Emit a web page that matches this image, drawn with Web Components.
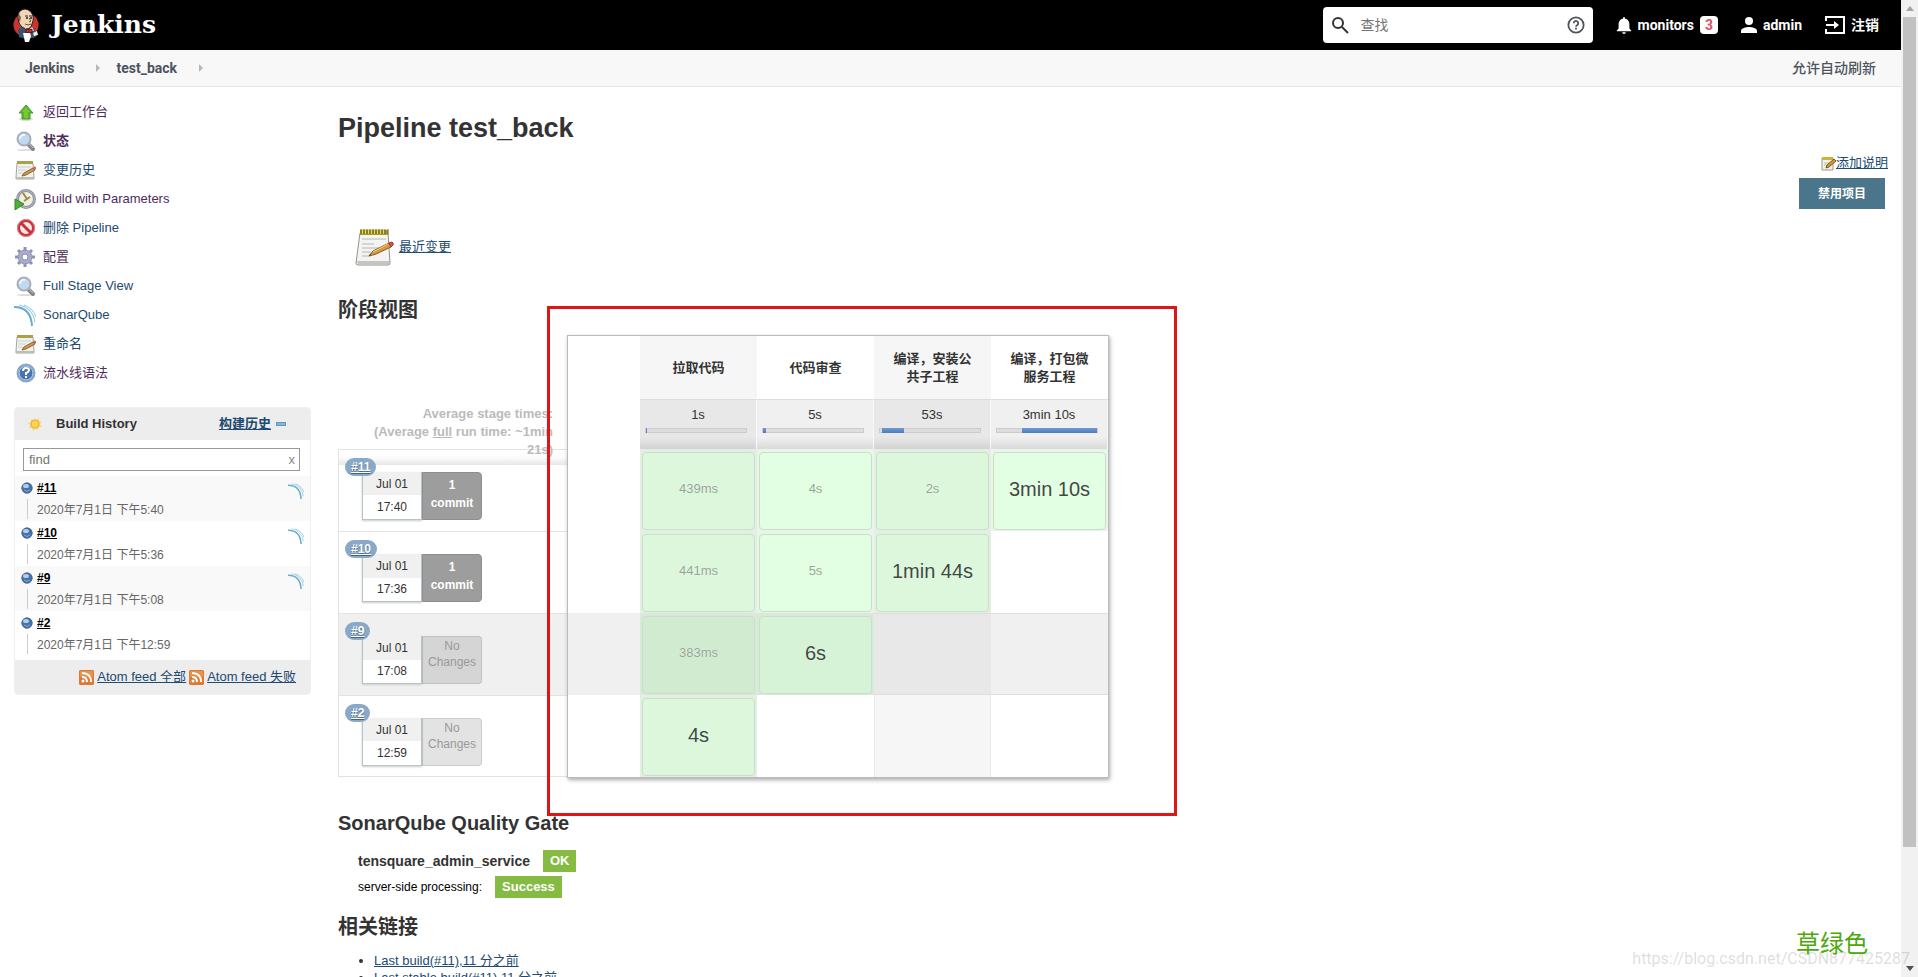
<!DOCTYPE html>
<html lang="zh-CN">
<head>
<meta charset="UTF-8">
<meta name="viewport" content="width=device-width, initial-scale=1.0">
<title>test_back [Jenkins]</title>
<style>
  html, body {
    height: 100%;
    margin: 0;
    overflow: hidden;
  }

  body {
    font-family: "Liberation Sans", "Noto Sans CJK SC", sans-serif;
    font-size: 13px;
    line-height: 18px;
    color: #333;
    background-color: #fff;
    --link: #204a6f;
    --visited: #4f2c5a;
  }
</style>
</head>
<body>
<jenkins-app></jenkins-app>

<script>
// Icons
const notepad = `
  <path d="M5 6h28l2 30q0 2-2 2H3q-2 0-2-2z" fill="#f4f4f2" stroke="#92928c"/>
  <path d="M2 34h32v3H3z" fill="#c4c4c0"/>
  <path d="M5 3h28v5H5z" fill="#a79a2c"/>
  <path d="M6 2v5M9 2v5M12 2v5M15 2v5M18 2v5M21 2v5M24 2v5M27 2v5M30 2v5M33 2v5" stroke="#6d6315" stroke-width="1"/>
  <path d="M7.500 2v5M10.500 2v5M13.500 2v5M16.500 2v5M19.500 2v5M22.500 2v5M25.500 2v5M28.500 2v5" stroke="#e8dc64" stroke-width="1"/>
  <path d="M7 12h24M7 17h12M7 21h20M7 25h9M7 29h8" stroke="#b4b6ba"/>
  <path d="M14 29l4-5 16-8 2 4-15 7z" fill="#d79a3f" stroke="#8a5a1c"/>
  <path d="M18 25l15-8" stroke="#f3cf86" stroke-width="1"/>
  <path d="M34 16l3-1q2 1 1 3l-2 2z" fill="#d8575a" stroke="#a33"/>
  <path d="M14 29l1-2 1 1z" fill="#333"/>`;

const data_icons = {
  butler: ['0 0 26 34', `
    <ellipse cx="13" cy="17" rx="12.500" ry="12" fill="#c8342e"/>
    <path d="M5 22q3-4 8-3 6-1 9 3l1 7q-9 3-17 0z" fill="#3a546b"/>
    <path d="M6 4q6-6 12 0 4 5 1 12-1 5-6 5-5-1-7-6-2-7 0-11z" fill="#f0d6b7" stroke="#2b1a14" stroke-width="1"/>
    <path d="M6 5Q4 9 7 14l1-5q-2-2-2-4z" fill="#7b6350"/>
    <path d="M12 8h3M16 8h3" stroke="#3a2a20" stroke-width="1"/>
    <circle cx="14" cy="10" r="1" fill="#222"/><circle cx="18" cy="10" r="1" fill="#222"/>
    <path d="M16 10l2 3-2 1M12 16q3 2 6 0" fill="none" stroke="#7d4a35" stroke-width="1"/>
    <path d="M12 19l3 4 4-4 2 4-8-1z" fill="#fff"/>
    <path d="M13 21l3 1 3-1v4l-3-1-3 1z" fill="#c8342e" stroke="#5c1210" stroke-width="1"/>
    <path d="M10 25h7l1 3-2 6h-4z" fill="#fff"/>
    <path d="M20 25l4-2 1 4-4 1z" fill="#f4f0e6"/>`],
  search: ['0 0 18 18', '<circle cx="7" cy="7" r="5" fill="none" stroke="#333" stroke-width="2"/><path d="M11 11l6 6" stroke="#333" stroke-width="2"/>'],
  question: ['0 0 20 20', '<circle cx="10" cy="10" r="8.500" fill="none" stroke="#4d545d" stroke-width="2"/><path d="M7.500 8a2.500 2.500 0 1 1 4 2Q10 11 10 12" fill="none" stroke="#4d545d" stroke-width="2"/><path d="M9 13h2v2H9z" fill="#4d545d"/>'],
  bell: ['0 0 16 20', '<path d="M8 20a2 2 0 0 0 2-2H6a2 2 0 0 0 2 2zM14 14V9c0-3-2-6-5-6V2a1 1 0 0 0-2 0v1C4 3 2 6 2 9v5l-2 2v1h16v-1z" fill="#fff"/>'],
  person: ['0 0 16 16', '<circle cx="8" cy="4" r="4" fill="#fff"/><path d="M0 16v-2c0-3 5-4 8-4s8 1 8 4v2z" fill="#fff"/>'],
  logout: ['0 0 20 18', '<path d="M1 5V1h18v16H1v-4M1 9h11" fill="none" stroke="#fff" stroke-width="2"/><path d="M9 5l5 4-5 4z" fill="#fff"/>'],
  up: ['0 0 22 22', '<ellipse cx="12" cy="18" rx="7" ry="2" fill="#ddd"/><path d="M12 4l7 8h-3v6H8v-6H5z" fill="#5cb52c" stroke="#4b9a26"/><path d="M12 6l4 5h-2v6h-4v-6H8z" fill="#74c83a"/>'],
  lens: ['0 0 22 22', '<ellipse cx="11" cy="20" rx="8" ry="1" fill="#ddd"/><path d="M14 14l5 5" stroke="#85868c" stroke-width="4" stroke-linecap="round"/><path d="M15 14l4 4" stroke="#c3c3c8" stroke-width="1"/><circle cx="10" cy="9" r="6.500" fill="#bfd9f2" stroke="#a9aeb9" stroke-width="2"/><path d="M6 9a4 4 0 0 1 5-4" stroke="#eef7ff" stroke-width="2" fill="none"/>'],
  notepad: ['0 0 40 40', notepad],
  notes: ['0 0 22 22', `
    <path d="M3 4h16l1 14v2H2v-2z" fill="#f1f1ee" stroke="#a6a69f"/>
    <path d="M2 18h18v2H2z" fill="#bdbdb8"/>
    <path d="M3 2h16v3H3z" fill="#aaa04a"/>
    <path d="M4 8h13M4 11h8M4 14h5" stroke="#cfd0d2"/>
    <path d="M8 17l2-3 9-5 2 2-9 5z" fill="#cf9a4b" stroke="#8a6430"/>
    <path d="M20 8l2 2" stroke="#c9605c" stroke-width="2"/>`],
  clock: ['0 0 22 22', '<circle cx="12" cy="11" r="8.500" fill="#eef0e6" stroke="#8b8e98" stroke-width="3"/><circle cx="12" cy="11" r="8.500" fill="none" stroke="#b9bcc6" stroke-width="1"/><path d="M9 5l4 6-3 2M13 11l3-2" stroke="#a3893a" stroke-width="2" fill="none"/><path d="M1 11l9 5-9 6z" fill="#4fae35" stroke="#2f8a24"/>'],
  forbid: ['0 0 22 22', '<circle cx="12" cy="11" r="7.500" fill="#f3e9e9" stroke="#c8323a" stroke-width="3"/><circle cx="12" cy="11" r="8.500" fill="none" stroke="#e08a8e" stroke-width="1"/><path d="M7 6l10 10" stroke="#c8323a" stroke-width="3"/>'],
  gear: ['0 0 22 22', '<g stroke="#8f92b4" stroke-width="3"><path d="M11 1v20M1 11h20M4 4l14 14M18 4L4 18"/></g><circle cx="11" cy="11" r="7" fill="#a9abca" stroke="#9093b4"/><circle cx="11" cy="11" r="3" fill="#fff" stroke="#8a8dad"/>'],
  sonar: ['0 0 22 22', '<g fill="none"><path d="M0 3q17 0 18 19" stroke="#68abcb" stroke-width="2"/><path d="M5 1q14 3 16 17M10 1q10 4 12 12" stroke="#8fc3dc"/></g>'],
  help: ['0 0 22 22', '<circle cx="12" cy="11" r="8.500" fill="#4674b0" stroke="#8ba5c9" stroke-width="2"/><circle cx="12" cy="11" r="7" fill="none" stroke="#c5d6ec"/><path d="M9 9q0-3 3-3t3 2q0 2-3 3v2" fill="none" stroke="#fff" stroke-width="2"/><path d="M11 14h2v2h-2z" fill="#fff"/>'],
  sun: ['0 0 16 16', '<path d="M8 1l1 3 3-2 0 3 3 1-2 2 2 3-3 0-1 3-3-1-2 2-1-3-3 0 1-3-2-2 3-1 0-3 3 1z" fill="#f3d68a"/><circle cx="8" cy="8" r="4" fill="#ffd84a" stroke="#eda93a"/>'],
  minus: ['0 0 10 4', '<path d="M0 0h10v4H0z" fill="#5e9bc8"/><path d="M1 2h8" stroke="#a9cfea"/>'],
  ball: ['0 0 12 12', '<circle cx="6" cy="6" r="5.500" fill="#4573ab"/><circle cx="6" cy="6" r="5" fill="none" stroke="#4d678c"/><ellipse cx="5" cy="4" rx="3" ry="2" fill="#b4cdea"/><path d="M3 8q3 3 6 0" stroke="#7fa8d6" fill="none"/>'],
  rss: ['0 0 15 15', '<path d="M1 0h13l1 1v13l-1 1H1l-1-1V1z" fill="#dd7a35"/><path d="M1 1h13v6H1z" fill="#e8924f"/><circle cx="4" cy="11" r="1.500" fill="#fff"/><path d="M3 7q5 0 5 5M3 3q9 0 9 9" fill="none" stroke="#fff" stroke-width="2"/>'],
  edit: ['0 0 15 15', '<path d="M1 2h11v12H1z" fill="#f2f1e4" stroke="#9a9a8e"/><path d="M1 1h11v3H1z" fill="#c9b53c"/><path d="M3 7h5M3 9h4" stroke="#bbb"/><path d="M5 12l1-3 7-6 2 2-7 6z" fill="#cc9a3c" stroke="#7a5a1c"/>'],
  right: ['0 0 4 8', '<path d="M0 0l4 4-4 4z" fill="#b5b9bd"/>'],
  arrowup: ['0 0 8 5', '<path d="M0 5l4-5 4 5z" fill="#a3a3a3"/>'],
  arrowdown: ['0 0 8 5', '<path d="M0 0l4 5 4-5z" fill="#505050"/>']
};

// Sidebar tasks: icon, text, state
const data_tasks = [
  ['up', '返回工作台', 'visited'],
  ['lens', '状态', 'visited current'],
  ['notes', '变更历史', ''],
  ['clock', 'Build with Parameters', 'visited'],
  ['forbid', '删除 Pipeline', ''],
  ['gear', '配置', 'visited'],
  ['lens', 'Full Stage View', ''],
  ['sonar', 'SonarQube', ''],
  ['notes', '重命名', ''],
  ['help', '流水线语法', 'visited']
];

const data_builds = [
  { id: '#11', date: '2020年7月1日 下午5:40', sonar: true, time: '17:40', commits: 1, stages: ['439ms', '4s', '2s', '3min 10s'] },
  { id: '#10', date: '2020年7月1日 下午5:36', sonar: true, time: '17:36', commits: 1, stages: ['441ms', '5s', '1min 44s'] },
  { id: '#9', date: '2020年7月1日 下午5:08', sonar: true, time: '17:08', commits: 0, stages: ['383ms', '6s'] },
  { id: '#2', date: '2020年7月1日 下午12:59', sonar: false, time: '12:59', commits: 0, stages: ['4s'] }
];

// Stages: name, average, start and width of the bar in %
const data_stages = [
  ['拉取代码', '1s', 0, 1],
  ['代码审查', '5s', 0, 3],
  ['编译，安装公共子工程', '53s', 2, 22],
  ['编译，打包微服务工程', '3min 10s', 25, 75]
];

class JenkinsIcon extends HTMLElement {
  constructor() {
    super();
    this.attachShadow({ mode: "open" });
  }

  connectedCallback() {
    const [box, shape] = data_icons[this.getAttribute("name")];
    this.shadowRoot.innerHTML = `
      <style>
        :host {
          display: inline-block;
          flex: none;
          width: 22px;
          height: 22px;
        }

        svg {
          display: block;
          width: 100%;
          height: 100%;
        }
      </style>
      <svg viewBox="${box}" aria-hidden="true">${shape}</svg>
    `;
  }
}

class JenkinsHeader extends HTMLElement {
  constructor() {
    super();
    this.attachShadow({ mode: "open" });
  }

  connectedCallback() {
    this.shadowRoot.innerHTML = `
      <style>
        :host {
          display: flex;
          align-items: center;
          height: 50px;
          padding: 0 22px 0 13px;
          background-color: #000;
          color: #fff;
          font-family: Roboto, "Noto Sans CJK SC", sans-serif;
          font-size: 14px;
          font-weight: 700;
        }

        a {
          display: flex;
          align-items: center;
          color: inherit;
          text-decoration: none;
        }

        .logo {
          gap: 12px;
          margin-right: auto;
          font-family: "DejaVu Serif", serif;
          font-size: 25px;
        }

        .logo jenkins-icon {
          width: 26px;
          height: 34px;
        }

        .search {
          display: flex;
          align-items: center;
          box-sizing: border-box;
          width: 270px;
          height: 36px;
          padding: 0 8px;
          background-color: #fff;
          border-radius: 4px;
        }

        .search jenkins-icon {
          width: 18px;
          height: 18px;
        }

        input {
          flex: 1;
          min-width: 0;
          padding: 0 12px;
          border: 0;
          outline: 0;
          background: none;
          font: inherit;
          font-weight: 400;
        }

        input::placeholder {
          color: #757575;
        }

        .link {
          gap: 6px;
          margin-left: 23px;
        }

        .link jenkins-icon {
          width: 16px;
          height: 16px;
        }

        .link jenkins-icon.tall {
          height: 18px;
        }

        .link jenkins-icon.wide {
          width: 20px;
          height: 18px;
        }

        .count {
          width: 18px;
          border-radius: 4px;
          background-color: #fff;
          color: #e05263;
          text-align: center;
          line-height: 18px;
        }
      </style>
      <a class="logo" href="#"><jenkins-icon name="butler"></jenkins-icon><span>Jenkins</span></a>
      <div class="search">
        <jenkins-icon name="search"></jenkins-icon>
        <input type="text" placeholder="查找" aria-label="查找">
        <a href="#" aria-label="帮助"><jenkins-icon name="question"></jenkins-icon></a>
      </div>
      <a class="link" href="#"><jenkins-icon class="tall" name="bell"></jenkins-icon>monitors<span class="count">3</span></a>
      <a class="link" href="#"><jenkins-icon name="person"></jenkins-icon>admin</a>
      <a class="link" href="#"><jenkins-icon class="wide" name="logout"></jenkins-icon>注销</a>
    `;
  }
}

class JenkinsBreadcrumb extends HTMLElement {
  constructor() {
    super();
    this.attachShadow({ mode: "open" });
  }

  connectedCallback() {
    this.shadowRoot.innerHTML = `
      <style>
        :host {
          display: flex;
          align-items: center;
          box-sizing: border-box;
          height: 37px;
          padding: 0 25px;
          background-color: #f8f8f8;
          border-bottom: 1px solid #e6e6e6;
          font-family: Roboto, "Noto Sans CJK SC", sans-serif;
          font-size: 14px;
          font-weight: 700;
        }

        a {
          color: #4d545d;
          text-decoration: none;
        }

        jenkins-icon {
          width: 4px;
          height: 8px;
          margin: 0 16px 0 22px;
        }

        .refresh {
          margin-left: auto;
          font-weight: 500;
        }
      </style>
      <a href="#">Jenkins</a><jenkins-icon name="right"></jenkins-icon>
      <a href="#">test_back</a><jenkins-icon name="right"></jenkins-icon>
      <a class="refresh" href="#">允许自动刷新</a>
    `;
  }
}

class TaskList extends HTMLElement {
  constructor() {
    super();
    this.attachShadow({ mode: "open" });
  }

  connectedCallback() {
    this.shadowRoot.innerHTML = `
      <style>
        :host {
          display: block;
        }

        a {
          display: flex;
          align-items: center;
          gap: 7px;
          height: 29px;
          color: var(--link);
          text-decoration: none;
        }

        .visited {
          color: var(--visited);
        }

        .current {
          font-weight: 700;
        }
      </style>
      ${data_tasks.map(([icon, text, state]) => `
        <a class="${state}" href="#"><jenkins-icon name="${icon}"></jenkins-icon>${text}</a>
      `).join("")}
    `;
  }
}

class BuildHistory extends HTMLElement {
  constructor() {
    super();
    this.attachShadow({ mode: "open" });
  }

  connectedCallback() {
    this.shadowRoot.innerHTML = `
      <style>
        :host {
          display: block;
          box-sizing: border-box;
          border: 1px solid #f0f0f0;
          border-radius: 4px;
          overflow: hidden;
        }

        a {
          color: var(--link);
        }

        .head {
          display: flex;
          align-items: center;
          height: 32px;
          padding: 0 24px 0 12px;
          background-color: #ededed;
          font-weight: 700;
        }

        .head jenkins-icon {
          width: 16px;
          height: 16px;
          margin-right: 13px;
        }

        .head a {
          margin-left: auto;
        }

        .head button {
          display: flex;
          margin-left: 5px;
          padding: 0;
          border: 0;
          background: none;
        }

        .head button jenkins-icon {
          width: 10px;
          height: 4px;
          margin: 0;
        }

        .find {
          display: flex;
          align-items: center;
          box-sizing: border-box;
          height: 23px;
          margin: 8px 10px 5px 8px;
          padding: 0 4px 0 5px;
          border: 1px solid #999;
          color: #888;
        }

        .find input {
          flex: 1;
          min-width: 0;
          padding: 0;
          border: 0;
          outline: 0;
          background: none;
          font: inherit;
        }

        .find input::placeholder {
          color: #757575;
        }

        .build {
          display: grid;
          grid-template-columns: 12px 1fr 16px;
          grid-template-rows: 23px 22px;
          column-gap: 4px;
          align-items: center;
          padding: 0 6px;
        }

        .build:nth-of-type(odd) {
          background-color: #f9f9f9;
        }

        .build jenkins-icon {
          width: 12px;
          height: 12px;
        }

        .build jenkins-icon.sonar {
          align-self: end;
          width: 16px;
          height: 16px;
        }

        .build a {
          color: #000;
          font-size: 12px;
          font-weight: 700;
        }

        .line {
          grid-row: 2;
          align-self: start;
          justify-self: center;
          width: 1px;
          height: 20px;
          background-color: #ccc;
        }

        .date {
          grid-row: 2;
          grid-column: 2;
          font-size: 12px;
          color: #666;
        }

        .feeds {
          display: flex;
          align-items: center;
          justify-content: flex-end;
          gap: 3px;
          height: 34px;
          margin-top: 4px;
          padding-right: 14px;
          background-color: #ededed;
        }

        .feeds jenkins-icon {
          width: 15px;
          height: 15px;
        }
      </style>
      <div class="head">
        <jenkins-icon name="sun"></jenkins-icon>Build History
        <a href="#">构建历史</a>
        <button type="button" aria-label="折叠"><jenkins-icon name="minus"></jenkins-icon></button>
      </div>
      <div class="find"><input type="text" placeholder="find" aria-label="find"><span>x</span></div>
      <section>
        ${data_builds.map(build => `
          <div class="build">
            <jenkins-icon name="ball"></jenkins-icon>
            <a href="#"><span>${build.id}</span></a>
            ${build.sonar ? '<jenkins-icon class="sonar" name="sonar"></jenkins-icon>' : ''}
            <span class="line"></span>
            <span class="date">${build.date}</span>
          </div>
        `).join("")}
      </section>
      <div class="feeds">
        <jenkins-icon name="rss"></jenkins-icon><a href="#">Atom feed 全部</a>
        <jenkins-icon name="rss"></jenkins-icon><a href="#">Atom feed 失败</a>
      </div>
    `;
  }
}

// One run at the left of the stage table
class StageRun extends HTMLElement {
  constructor() {
    super();
    this.attachShadow({ mode: "open" });
  }

  connectedCallback() {
    const commits = Number(this.getAttribute("commits"));
    this.shadowRoot.innerHTML = `
      <style>
        :host {
          display: flex;
          position: relative;
          box-sizing: border-box;
          height: 82px;
          padding: 22px 0 0 23px;
          border-top: 1px solid #e2e2e2;
          border-left: 1px solid #e2e2e2;
          font-size: 12px;
        }

        .badge {
          position: absolute;
          top: 8px;
          left: 6px;
          padding: 0 6px;
          border-radius: 9px;
          background-color: #8aa9c9;
          color: #fff;
          font-weight: 700;
          text-shadow: 0 1px 1px #46617e;
        }

        .when {
          display: grid;
          grid-template-rows: 1fr 1fr;
          align-items: center;
          box-sizing: border-box;
          width: 60px;
          height: 48px;
          border: 1px solid #b4c4c4;
          border-top: 0;
          background: linear-gradient(#f0f0f0 50%, #fff 50%);
          box-shadow: 0 1px 2px #ccc;
          text-align: center;
        }

        .changes {
          box-sizing: border-box;
          width: 60px;
          height: 48px;
          padding-top: 3px;
          border: 1px solid #8e8e8e;
          border-radius: 0 4px 4px 0;
          background-color: #9d9d9d;
          color: #fff;
          font-weight: 700;
          text-align: center;
        }

        .changes.none {
          padding-top: 1px;
          border-color: rgba(0, 0, 0, .1);
          background-color: rgba(0, 0, 0, .11);
          color: #999;
          font-weight: 400;
          line-height: 16px;
        }
      </style>
      <div class="when"><span>Jul 01</span><span><slot></slot></span></div>
      ${commits
        ? `<div class="changes">${commits}<br>commit</div>`
        : '<div class="changes none">No<br>Changes</div>'}
      <a class="badge" href="#">${this.getAttribute("run")}</a>
    `;
  }
}

class StageView extends HTMLElement {
  constructor() {
    super();
    this.attachShadow({ mode: "open" });
  }

  connectedCallback() {
    this.shadowRoot.innerHTML = `
      <style>
        :host {
          display: grid;
          position: relative;
          grid-template-columns: 229px 542px;
        }

        .runs {
          padding-top: 70px;
        }

        .average {
          position: relative;
          z-index: 1;
          width: 190px;
          margin: 0 14px -10px auto;
          color: #bbb;
          font-weight: 700;
          text-align: right;
        }

        stage-run:first-of-type {
          background: linear-gradient(#fff, #fcfcfc 50%, #e6e6e6) 0 0 / 100% 15px no-repeat;
        }

        stage-run:last-of-type {
          border-bottom: 1px solid #e2e2e2;
        }

        .hover {
          background-color: #f0f0f0;
        }

        table {
          position: relative;
          table-layout: fixed;
          width: 542px;
          border: 1px solid #bbb;
          border-spacing: 0;
          background-color: #fff;
          box-shadow: 1px 2px 4px #aaa;
          text-align: center;
        }

        th, td {
          box-sizing: border-box;
          padding: 0;
        }

        .empty {
          width: 72px;
        }

        .names th {
          height: 63px;
          padding: 0 18px;
        }

        .names th:nth-child(even) {
          background-color: #f6f6f6;
        }

        .times td {
          height: 50px;
          padding: 6px 5px 0;
          border-top: 1px solid #ddd;
          border-right: 1px solid #f8f8f8;
          background: linear-gradient(#f0f0f0 75%, #dadada);
          vertical-align: top;
        }

        .times td:nth-child(even) {
          background: linear-gradient(#e8e8e8 75%, #d2d2d2);
        }

        .times td.empty {
          border: 0;
          background: #fff;
        }

        .bar {
          box-sizing: border-box;
          height: 5px;
          margin: 4px 4px 0 0;
          border: 1px solid #ccc;
          background-color: #ddd;
        }

        .bar div {
          height: 5px;
          margin-top: -1px;
          background: linear-gradient(#7099d0, #4a7cc0);
        }

        .stage {
          height: 82px;
        }

        .stage:nth-child(even) {
          border-left: 1px solid #e9e9e9;
          border-right: 1px solid #e9e9e9;
          background-color: #f6f6f6;
        }

        .stage.done {
          padding: 3px 2px 1px;
          border: 0;
          background-color: #eaf5ea;
        }

        .stage.done:nth-child(even) {
          background-color: #e2efe2;
        }

        .box {
          display: flex;
          align-items: center;
          justify-content: center;
          box-sizing: border-box;
          height: 78px;
          padding-bottom: 4px;
          border: 1px solid #c9dfc9;
          border-radius: 4px;
          background-color: #e3ffe3;
          color: #93a693;
          text-shadow: 0 0 1px #fff;
        }

        .stage:nth-child(even) .box {
          background-color: #dcf7dc;
        }

        .box.last {
          color: #3c4b3c;
          font-size: 20px;
        }

        .hover .stage {
          border-top: 1px solid #dfdfdf;
          border-bottom: 1px solid #dfdfdf;
        }

        .hover .stage:nth-child(even) {
          background-color: #e8e8e8;
        }

        .hover .stage.done {
          border: 0;
          background-color: #d9e9d9;
        }

        .hover .stage .box {
          background-color: #d7f3d7;
        }

        .hover .stage:nth-child(even) .box {
          background-color: #d0ebd0;
        }

        .frame {
          position: absolute;
          z-index: 2;
          top: -29px;
          left: 209px;
          box-sizing: border-box;
          width: 630px;
          height: 510px;
          border: 3px solid #dd1515;
          pointer-events: none;
        }
      </style>
      <div class="runs">
        <div class="average">Average stage times:<br>(Average <u>full</u> run time: ~1min 21s)</div>
        ${data_builds.map((build, i) => `
          <stage-run class="${i === 2 ? 'hover' : ''}" run="${build.id}" commits="${build.commits}">${build.time}</stage-run>
        `).join("")}
      </div>
      <table>
        <thead>
          <tr class="names">
            <td class="empty"></td>
            ${data_stages.map(stage => `<th scope="col">${stage[0]}</th>`).join("")}
          </tr>
          <tr class="times">
            <td class="empty"></td>
            ${data_stages.map(([, time, start, width]) => `
              <td>${time}<div class="bar"><div style="margin-left: ${start}%; width: ${width}%"></div></div></td>
            `).join("")}
          </tr>
        </thead>
        <tbody>
          ${data_builds.map((build, i) => `
            <tr class="${i === 2 ? 'hover' : ''}">
              <td class="empty"></td>
              ${data_stages.map((stage, n) => this.cell(build.stages, n)).join("")}
            </tr>
          `).join("")}
        </tbody>
      </table>
      <div class="frame"></div>
    `;
  }

  cell(stages, n) {
    if (!stages[n]) {
      return '<td class="stage"></td>';
    }
    const last = n === stages.length - 1 ? 'last' : '';
    return `<td class="stage done"><div class="box ${last}">${stages[n]}</div></td>`;
  }
}

class QualityGate extends HTMLElement {
  constructor() {
    super();
    this.attachShadow({ mode: "open" });
  }

  connectedCallback() {
    this.shadowRoot.innerHTML = `
      <style>
        :host {
          display: grid;
          gap: 4px;
          padding-left: 20px;
        }

        div {
          display: flex;
          align-items: center;
          gap: 13px;
          height: 22px;
          color: #000;
          font-size: 12px;
        }

        .project {
          color: #333;
          font-size: 14px;
          font-weight: 700;
        }

        .label {
          padding: 0 7px;
          background-color: #85bb43;
          color: #fff;
          font-size: 13px;
          font-weight: 700;
          line-height: 22px;
        }
      </style>
      <div><span class="project">tensquare_admin_service</span><span class="label">OK</span></div>
      <div><span>server-side processing:</span><span class="label">Success</span></div>
    `;
  }
}

class ScrollRail extends HTMLElement {
  constructor() {
    super();
    this.attachShadow({ mode: "open" });
  }

  connectedCallback() {
    this.shadowRoot.innerHTML = `
      <style>
        :host {
          display: grid;
          grid-template-rows: 17px 1fr 17px;
          justify-items: center;
          align-items: center;
          width: 17px;
          background-color: #f1f1f1;
        }

        jenkins-icon {
          width: 8px;
          height: 5px;
        }

        .thumb {
          align-self: start;
          width: 13px;
          height: 88%;
          background-color: #c1c1c1;
        }
      </style>
      <jenkins-icon name="arrowup"></jenkins-icon>
      <div class="thumb"></div>
      <jenkins-icon name="arrowdown"></jenkins-icon>
    `;
  }
}

class JenkinsApp extends HTMLElement {
  constructor() {
    super();
    this.attachShadow({ mode: "open" });
  }

  connectedCallback() {
    this.shadowRoot.innerHTML = `
      <style>
        :host {
          display: grid;
          position: relative;
          grid-template-columns: minmax(0, 1fr) 17px;
          height: 100vh;
          overflow: hidden;
        }

        .content {
          overflow: hidden;
        }

        .page {
          display: grid;
          grid-template-columns: 297px minmax(0, 1fr);
          column-gap: 27px;
          padding: 10px 13px 0 14px;
        }

        build-history {
          margin-top: 20px;
        }

        main {
          padding-top: 15px;
        }

        h1, h2 {
          margin: 0;
        }

        h1 {
          font-size: 27px;
          line-height: 32px;
        }

        h2 {
          font-size: 20px;
          line-height: 24px;
        }

        a {
          color: var(--link);
        }

        .description {
          display: grid;
          justify-items: end;
          gap: 6px;
          margin-top: 10px;
        }

        .description a, .changes {
          display: flex;
          align-items: center;
        }

        .description jenkins-icon {
          width: 15px;
          height: 15px;
        }

        button {
          height: 31px;
          margin-right: 3px;
          padding: 0 19px;
          border: 0;
          background-color: #4b758b;
          color: #fff;
          font: inherit;
          font-size: 12px;
          font-weight: 700;
        }

        .changes {
          gap: 4px;
          margin: 18px 0 31px 17px;
        }

        .changes jenkins-icon {
          width: 40px;
          height: 40px;
        }

        stage-view {
          margin: 13px 0 33px;
        }

        quality-gate {
          margin: 15px 0 17px;
        }

        ul {
          margin: 13px 0 0;
          padding-left: 36px;
          line-height: 17px;
        }

        .note, .watermark {
          position: absolute;
          white-space: nowrap;
        }

        .note {
          right: 50px;
          bottom: 17px;
          color: #4ca80c;
          font-size: 24px;
          line-height: 32px;
        }

        .watermark {
          right: 8px;
          bottom: 8px;
          color: rgba(120, 120, 120, .25);
          font-family: Roboto, sans-serif;
          font-size: 16px;
          line-height: 20px;
        }
      </style>
      <div class="content">
        <jenkins-header></jenkins-header>
        <jenkins-breadcrumb></jenkins-breadcrumb>
        <div class="page">
          <aside>
            <task-list></task-list>
            <build-history></build-history>
          </aside>
          <main>
            <h1>Pipeline test_back</h1>
            <div class="description">
              <a href="#"><jenkins-icon name="edit"></jenkins-icon>添加说明</a>
              <button type="button">禁用项目</button>
            </div>
            <div class="changes"><jenkins-icon name="notepad"></jenkins-icon><a href="#">最近变更</a></div>
            <h2>阶段视图</h2>
            <stage-view></stage-view>
            <h2>SonarQube Quality Gate</h2>
            <quality-gate></quality-gate>
            <h2>相关链接</h2>
            <ul>
              <li><a href="#">Last build(#11),11 分之前</a></li>
              <li><a href="#">Last stable build(#11),11 分之前</a></li>
            </ul>
          </main>
        </div>
      </div>
      <scroll-rail></scroll-rail>
      <div class="watermark">https://blog.csdn.net/CSDN877425287</div>
      <div class="note">草绿色</div>
    `;
  }
}

// -------------------------------------------------

customElements.define("jenkins-icon", JenkinsIcon);
customElements.define("jenkins-header", JenkinsHeader);
customElements.define("jenkins-breadcrumb", JenkinsBreadcrumb);
customElements.define("task-list", TaskList);
customElements.define("build-history", BuildHistory);
customElements.define("stage-run", StageRun);
customElements.define("stage-view", StageView);
customElements.define("quality-gate", QualityGate);
customElements.define("scroll-rail", ScrollRail);
customElements.define("jenkins-app", JenkinsApp);
</script>
</body>
</html>
